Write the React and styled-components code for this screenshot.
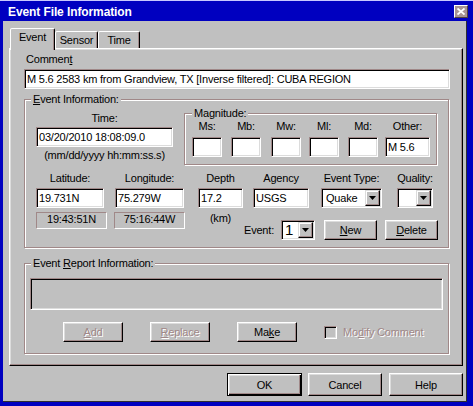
import React from 'react';
import styled, { createGlobalStyle, css } from 'styled-components';

const face = '#c0c0c0';
const shadow = '#a08888';
const light = '#dcdcdc';
const blue = '#0000c0';

const GlobalStyle = createGlobalStyle`
  html, body { margin: 0; padding: 0; background: ${blue}; }
  body {
    font-family: "Liberation Sans", Arial, sans-serif;
    font-size: 11px;
    letter-spacing: -0.2px;
    color: #000;
  }
  *, *::before, *::after { box-sizing: border-box; }
`;

const sunken = css`
  border: 1px solid;
  border-color: ${shadow} #fff #fff ${shadow};
  box-shadow: inset 1px 1px 0 #000, inset -1px -1px 0 ${light};
`;

const raised = css`
  border: 1px solid;
  border-color: #fff #000 #000 #fff;
  box-shadow: inset -1px -1px 0 ${shadow}, inset 1px 1px 0 ${light};
`;

const Window = styled.div`
  width: 473px;
  height: 406px;
  display: flex;
  flex-direction: column;
  background: ${blue};
  border-top: 1px solid #c8c8ff;
  overflow: hidden;
`;

const TitleBar = styled.div`
  height: 20px;
  flex: none;
  display: flex;
  align-items: center;
  justify-content: space-between;
  padding: 0 5px 0 8px;
`;

const Title = styled.span`
  color: #fff;
  font-weight: bold;
  font-size: 12px;
  letter-spacing: -0.1px;
  padding-top: 2px;
`;

const CloseBox = styled.div`
  width: 14px;
  height: 13px;
  background: #a89494;
  border: 1px solid;
  border-color: #fff #504040 #504040 #fff;
  display: flex;
  align-items: center;
  justify-content: center;
`;

const Client = styled.div`
  flex: 1;
  margin: 0 6px 4px 3px;
  background: ${face};
  border-right: 1px solid #303030;
  border-bottom: 1px solid #303030;
  padding: 7px 3px 0 6px;
  display: flex;
  flex-direction: column;
`;

const TabRow = styled.div`
  display: flex;
  align-items: flex-end;
  height: 20px;
  flex: none;
  padding-left: 1px;
`;

const Tab = styled.div`
  position: relative;
  z-index: ${(p) => (p.$active ? 2 : 0)};
  width: ${(p) => p.$w}px;
  height: ${(p) => (p.$active ? 22 : 17)}px;
  margin-bottom: ${(p) => (p.$active ? -2 : 0)}px;
  background: ${face};
  border: 1px solid;
  border-bottom: none;
  border-color: #fff #000 transparent #fff;
  box-shadow: inset -1px 0 0 ${shadow};
  border-radius: 2px 2px 0 0;
  padding-top: 2px;
  text-align: center;
  line-height: 13px;
`;

const Panel = styled.div`
  height: 318px;
  flex: none;
  ${raised};
  padding: 4px 11px 0 14px;
  display: flex;
  flex-direction: column;
  align-items: flex-start;
`;

const Key = styled.span`
  text-decoration: underline;
`;

const Caption = styled.div`
  line-height: 13px;
  white-space: nowrap;
  padding-left: ${(p) => p.$pl || 0}px;
  width: ${(p) => (p.$w ? `${p.$w}px` : 'auto')};
  flex: none;
`;

const Field = styled.div`
  width: ${(p) => p.$w}px;
  height: ${(p) => p.$h || 20}px;
  margin-top: ${(p) => p.$mt || 0}px;
  flex: none;
  background: ${(p) => (p.$disabled ? face : '#fff')};
  ${sunken};
  padding: 0 2px;
  line-height: 18px;
  white-space: nowrap;
  overflow: hidden;
`;

const Readout = styled.div`
  width: 71px;
  height: 17px;
  margin-left: ${(p) => p.$ml || 0}px;
  flex: none;
  border: 1px solid;
  border-color: ${shadow} #fff #fff ${shadow};
  text-align: center;
  line-height: 13px;
`;

const Group = styled.fieldset`
  margin: ${(p) => p.$mt || 0}px 0 0 0;
  padding: 0;
  min-width: 0;
  width: ${(p) => p.$w}px;
  flex: none;
  border: 1px solid ${shadow};
  box-shadow: 1px 1px 0 #fff, inset 1px 1px 0 #fff;
`;

const Legend = styled.legend`
  margin-left: ${(p) => p.$ml}px;
  padding: 0 2px;
  line-height: 13px;
  background: ${face};
`;

const InfoBody = styled.div`
  display: flex;
  flex-direction: column;
  padding: 1px 0 7px 11px;
`;

const Row = styled.div`
  display: flex;
  align-items: flex-start;
  margin-top: ${(p) => p.$mt || 0}px;
`;

const Col = styled.div`
  display: flex;
  flex-direction: column;
  align-items: center;
  flex: none;
  width: ${(p) => p.$w}px;
  margin-left: ${(p) => p.$ml || 0}px;
  padding-top: ${(p) => p.$pt || 0}px;
`;

const MagRow = styled.div`
  display: flex;
  padding: 0 0 7px 7px;
`;

const Combo = styled.div`
  width: ${(p) => p.$w}px;
  height: 20px;
  margin-top: ${(p) => p.$mt || 0}px;
  flex: none;
  background: #fff;
  ${sunken};
  padding: 1px;
  display: flex;
  align-items: center;
`;

const ComboText = styled.span`
  flex: 1;
  padding-left: ${(p) => p.$pl || 3}px;
  font-size: ${(p) => p.$fs || 11}px;
  line-height: 16px;
  white-space: nowrap;
  overflow: hidden;
`;

const DropBtn = styled.span`
  width: 15px;
  height: 16px;
  flex: none;
  background: ${face};
  border: 1px solid;
  border-color: ${light} #000 #000 ${light};
  box-shadow: inset -1px -1px 0 ${shadow}, inset 1px 1px 0 #fff;
  display: flex;
  align-items: center;
  justify-content: center;
`;

const EventCtl = styled.div`
  display: flex;
  align-items: center;
  height: 20px;
  margin: 8px 0 0 1px;
`;

const Button = styled.button`
  width: ${(p) => p.$w}px;
  height: ${(p) => p.$h || 20}px;
  margin-left: ${(p) => p.$ml || 0}px;
  flex: none;
  padding: 0;
  font: inherit;
  letter-spacing: inherit;
  background: ${face};
  color: ${(p) => (p.$disabled ? shadow : '#000')};
  text-shadow: ${(p) => (p.$disabled ? '1px 1px 0 #fff' : 'none')};
  ${raised};
  ${(p) =>
    p.$default &&
    css`
      border-color: #000;
      box-shadow: inset 1px 1px 0 #fff, inset -1px -1px 0 #000,
        inset -2px -2px 0 ${shadow}, inset 2px 2px 0 ${light};
    `}
`;

const ReportBody = styled.div`
  display: flex;
  flex-direction: column;
  padding: 8px 5px 11px 5px;
`;

const ReportButtons = styled.div`
  display: flex;
  align-items: center;
  margin-top: 12px;
  padding-left: 33px;
`;

const Check = styled.span`
  width: 13px;
  height: 13px;
  margin-left: 27px;
  flex: none;
  background: ${face};
  ${sunken};
`;

const DisabledLabel = styled.span`
  margin-left: 6px;
  color: ${shadow};
  text-shadow: 1px 1px 0 #fff;
  white-space: nowrap;
`;

const ButtonBar = styled.div`
  display: flex;
  justify-content: flex-end;
  margin-top: 7px;
`;

const Arrow = () => (
  <svg width="7" height="4" viewBox="0 0 7 4">
    <polygon points="0,0 7,0 3.5,4" fill="#000" />
  </svg>
);

const Dropdown = ({ w, value, mt }) => (
  <Combo $w={w} $mt={mt}>
    <ComboText>{value}</ComboText>
    <DropBtn>
      <Arrow />
    </DropBtn>
  </Combo>
);

const mags = [
  { label: 'Ms:', w: 30, ml: 0 },
  { label: 'Mb:', w: 30, ml: 9 },
  { label: 'Mw:', w: 30, ml: 10 },
  { label: 'Ml:', w: 30, ml: 8 },
  { label: 'Md:', w: 30, ml: 9 },
  { label: 'Other:', w: 45, ml: 7, value: 'M 5.6' },
];

export default function App() {
  return (
    <>
      <GlobalStyle />
      <Window>
        <TitleBar>
          <Title>Event File Information</Title>
          <CloseBox>
            <svg width="8" height="7" viewBox="0 0 8 7">
              <path d="M0.5 0.5 L7.5 6.5 M7.5 0.5 L0.5 6.5" stroke="#fff" strokeWidth="1.8" />
            </svg>
          </CloseBox>
        </TitleBar>
        <Client>
          <TabRow>
            <Tab $active $w={45}>Event</Tab>
            <Tab $w={43}>Sensor</Tab>
            <Tab $w={42}>Time</Tab>
          </TabRow>
          <Panel>
            <Caption $pl={2}>
              Commen<Key>t</Key>
            </Caption>
            <Field $w={426} $mt={3}>
              M 5.6 2583 km from Grandview, TX [Inverse filtered]: CUBA REGION
            </Field>

            <Group $w={425} $mt={4}>
              <Legend $ml={6}>
                <Key>E</Key>vent Information:
              </Legend>
              <InfoBody>
                <Row>
                  <Col $w={137} $pt={5}>
                    <Caption>Time:</Caption>
                    <Field $w={137} $mt={2}>03/20/2010 18:08:09.0</Field>
                    <Caption style={{ marginTop: 2 }}>(mm/dd/yyyy hh:mm:ss.s)</Caption>
                  </Col>
                  <Group $w={253} style={{ marginLeft: 11 }}>
                    <Legend $ml={7}>Magnitude:</Legend>
                    <MagRow>
                      {mags.map((m) => (
                        <Col key={m.label} $w={m.w} $ml={m.ml}>
                          <Caption>{m.label}</Caption>
                          <Field $w={m.w} $mt={4}>{m.value || ''}</Field>
                        </Col>
                      ))}
                    </MagRow>
                  </Group>
                </Row>

                <Row $mt={7}>
                  <Col $w={68}>
                    <Caption>Latitude:</Caption>
                    <Field $w={68} $mt={3}>19.731N</Field>
                  </Col>
                  <Col $w={69} $ml={11}>
                    <Caption>Longitude:</Caption>
                    <Field $w={69} $mt={3}>75.279W</Field>
                  </Col>
                  <Col $w={45} $ml={14}>
                    <Caption>Depth</Caption>
                    <Field $w={45} $mt={3}>17.2</Field>
                  </Col>
                  <Col $w={56} $ml={10}>
                    <Caption>Agency</Caption>
                    <Field $w={56} $mt={3}>USGS</Field>
                  </Col>
                  <Col $w={61} $ml={12}>
                    <Caption>Event Type:</Caption>
                    <Dropdown w={61} mt={3} value="Quake" />
                  </Col>
                  <Col $w={36} $ml={15}>
                    <Caption>Quality:</Caption>
                    <Dropdown w={36} mt={3} value="" />
                  </Col>
                </Row>

                <Row $mt={4}>
                  <Readout>19:43:51N</Readout>
                  <Readout $ml={7}>75:16:44W</Readout>
                  <Col $w={45} $ml={13}>
                    <Caption>(km)</Caption>
                  </Col>
                  <EventCtl>
                    <Caption $w={37}>Event:</Caption>
                    <Combo $w={34}>
                      <ComboText $pl={2} $fs={15}>1</ComboText>
                      <DropBtn>
                        <Arrow />
                      </DropBtn>
                    </Combo>
                    <Button $w={53} $ml={9}>
                      <Key>N</Key>ew
                    </Button>
                    <Button $w={53} $ml={8}>
                      <Key>D</Key>elete
                    </Button>
                  </EventCtl>
                </Row>
              </InfoBody>
            </Group>

            <Group $w={425} $mt={9}>
              <Legend $ml={6}>
                Event <Key>R</Key>eport Information:
              </Legend>
              <ReportBody>
                <Field $w={413} $h={32} $disabled />
                <ReportButtons>
                  <Button $w={60} $disabled>
                    <Key>A</Key>dd
                  </Button>
                  <Button $w={60} $ml={27} $disabled>
                    <Key>R</Key>eplace
                  </Button>
                  <Button $w={60} $ml={27}>
                    Ma<Key>k</Key>e
                  </Button>
                  <Check />
                  <DisabledLabel>
                    Mo<Key>d</Key>ify Comment
                  </DisabledLabel>
                </ReportButtons>
              </ReportBody>
            </Group>
          </Panel>
          <ButtonBar>
            <Button $w={75} $h={23} $default>OK</Button>
            <Button $w={74} $h={23} $ml={6}>Cancel</Button>
            <Button $w={74} $h={23} $ml={7}>Help</Button>
          </ButtonBar>
        </Client>
      </Window>
    </>
  );
}
